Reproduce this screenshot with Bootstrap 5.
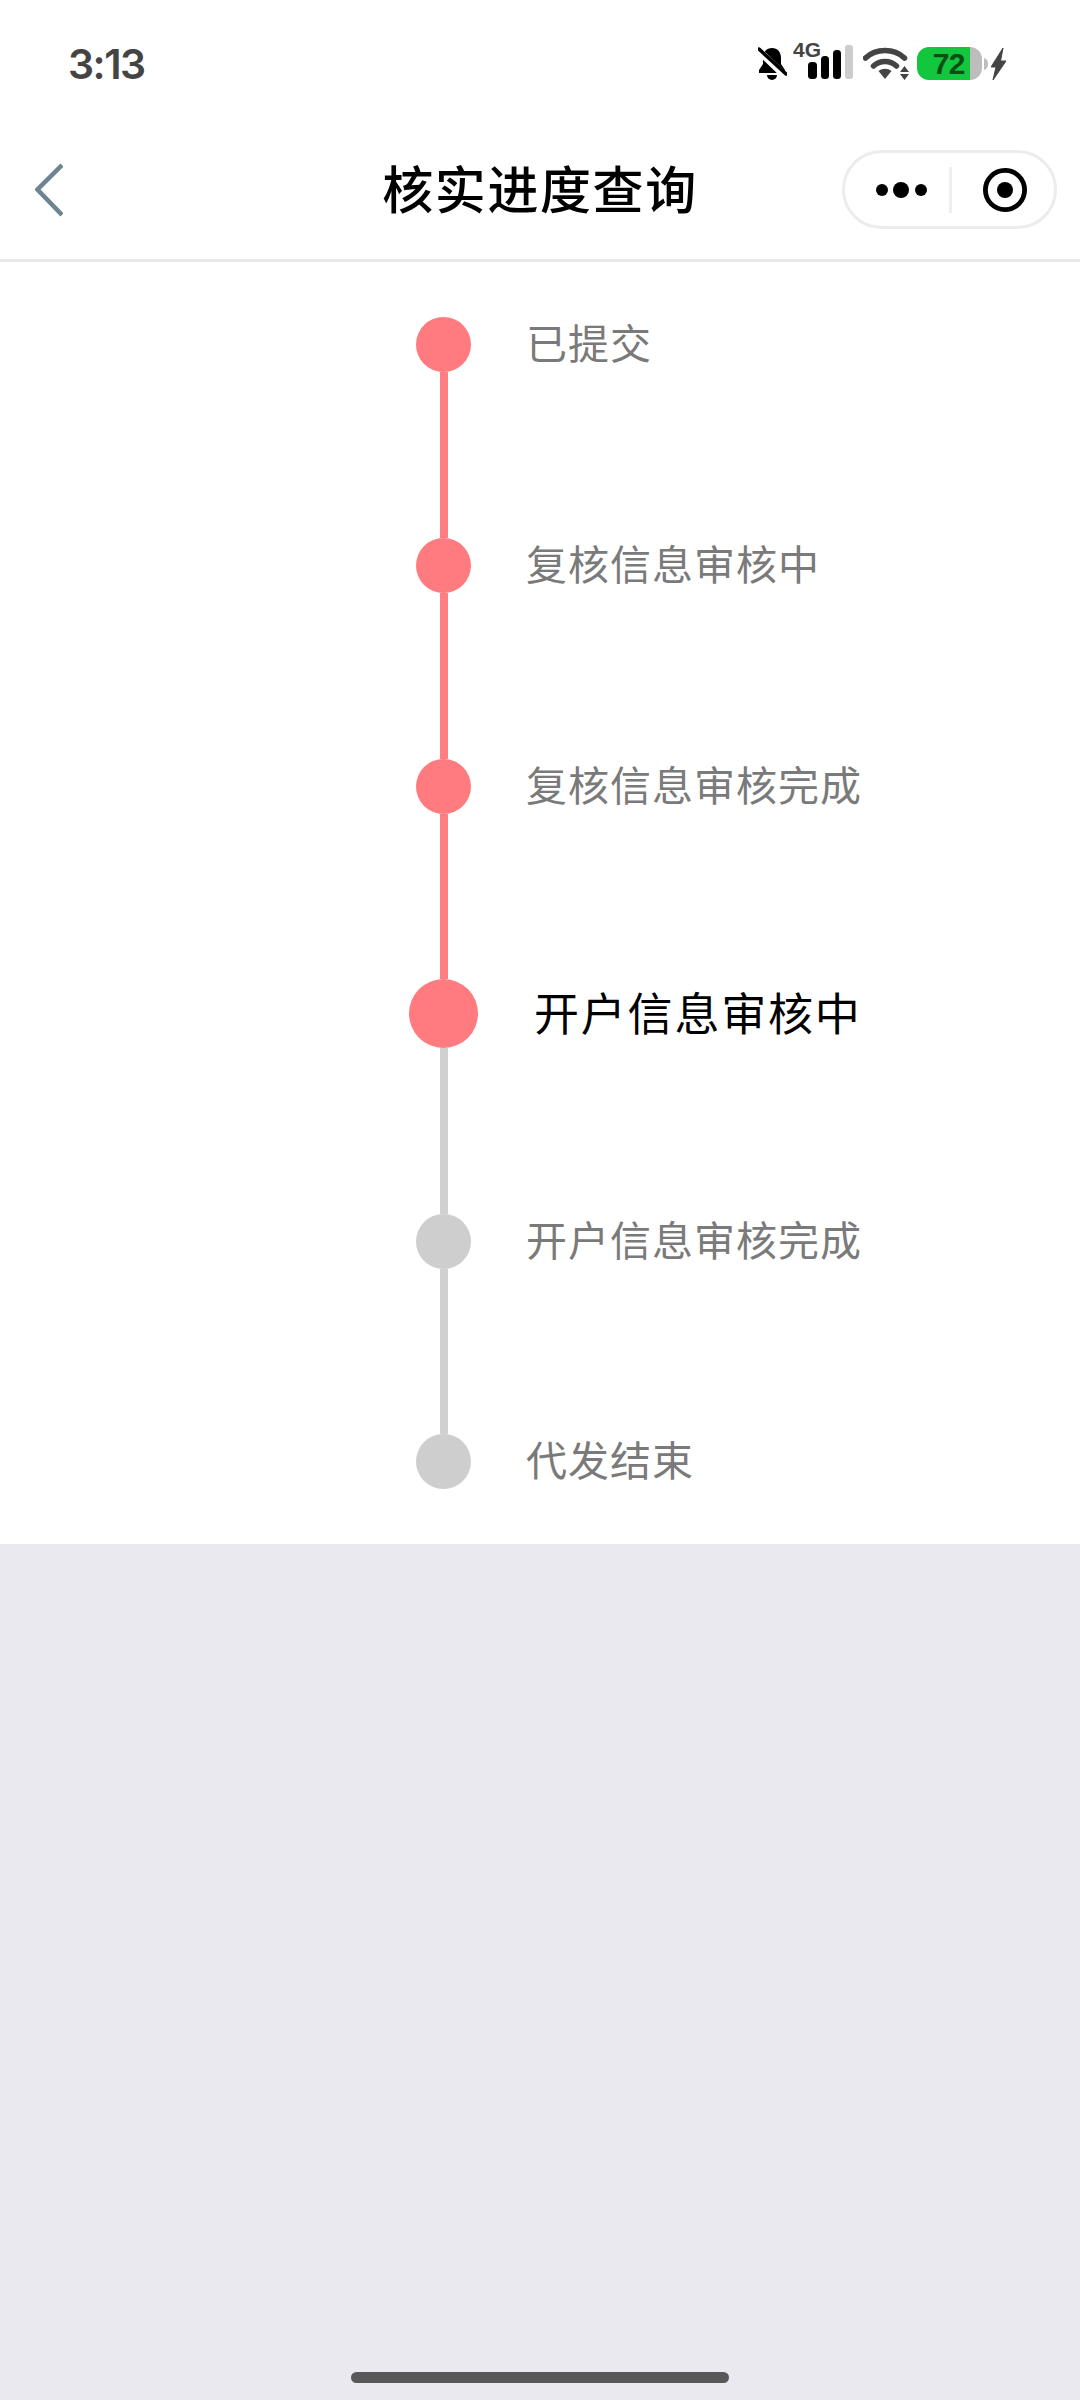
<!DOCTYPE html>
<html lang="zh-CN">
<head>
<meta charset="utf-8">
<link rel="stylesheet" href="https://cdn.jsdelivr.net/npm/bootstrap@5.3.0/dist/css/bootstrap.min.css">
<style>
html,body{height:100%}
body{width:1080px;height:2400px;background:#e9e9ef;font-family:"Liberation Sans","Noto Sans CJK SC",sans-serif;overflow:hidden}
.app-shell{height:2400px}
.status-strip{height:120px;padding:0 74px 0 68px;flex:none}
.clock{font-family:Inter,Roboto,sans-serif;font-weight:600;font-size:41px;line-height:1;color:#444;letter-spacing:-1.5px;margin-top:8px}
.status-icons{margin-top:2px}
.status-icons svg{display:block;flex:none}
.ic-bell{margin-right:6px}.ic-signal{margin-right:10px;margin-top:-4px}.ic-wifi{margin-right:8px}
.batt{width:65px;height:33px;border-radius:12px;overflow:hidden;margin-right:2px;flex:none}
.batt-fill{width:53px;background:#12c63e;color:#0a4d15;font:700 30px/33px "Liberation Sans",sans-serif;text-align:right;padding-right:5px;letter-spacing:-.5px}
.batt-rest{flex:1;background:#bdbdbd}
.ic-nub{margin:0 3px 10px 0}
.title-bar{display:grid;grid-template-columns:1fr auto 1fr;height:142px;padding:0;border-bottom:3px solid #e8e8e8;flex:none}
.back-col{padding-left:35px}
.page-title{font-family:"Noto Sans CJK SC",sans-serif;font-weight:500;font-size:51px;letter-spacing:1.6px;line-height:1;color:#000;margin-top:-4px}
.actions-col{padding-right:23px}
.capsule{width:215px;height:79px;border:3px solid #ececec;padding-left:31px}
.cap-sep{width:3px;height:46px;background:#efefef;margin:0 31px 0 22px}
.steps{display:grid;grid-template-columns:69px 1fr;column-gap:48px;padding:55px 0 55px 409px;justify-items:start;align-items:center;flex:none}
.node{width:55px;height:55px;justify-self:center;background:#ff7b7f}
.node-big{width:69px;height:69px}
.node-off{background:#cecece}
.stem{width:8px;height:166px;justify-self:center;background:#ff7e82}
.stem-tight{height:165px}
.stem-off{background:#d0d0d0}
.step-name{font-family:"Noto Sans CJK SC",sans-serif;font-size:41px;letter-spacing:1px;color:#7a7a7a;line-height:1;margin-top:-7px}
.step-now{font-size:45px;letter-spacing:1.8px;color:#000;margin-left:8px;margin-top:-5px}
.home-bar{width:378px;height:11px;background:#58585a;bottom:17px;left:351px}
</style>
</head>
<body>
<div class="app-shell d-flex flex-column position-relative">
  <div class="status-strip bg-white d-flex justify-content-between align-items-center">
    <div class="clock">3:13</div>
    <div class="status-icons d-flex align-items-end">
      <svg class="ic-bell" width="29" height="33" viewBox="0 0 29 33"><path d="M14 1c-5.500 0-9 4-9 10v6l-4 6v3h26v-3l-4-6v-6c0-6-3.500-10-9-10z" fill="#000"/><path d="M9 28h10a5 5 0 0 1-10 0z" fill="#000"/><path d="M1 4l26 25" stroke="#fff" stroke-width="7"/><path d="M1 2l27 25" stroke="#000" stroke-width="3.500" stroke-linecap="round"/></svg>
      <svg class="ic-signal" width="60" height="42" viewBox="0 0 60 42"><text x="0" y="19" font-family="Liberation Sans" font-weight="700" font-size="21" fill="#444">4G</text><rect x="15" y="24" width="9" height="17" rx="3.500"/><rect x="28" y="18" width="8" height="23" rx="3.500"/><rect x="40" y="12" width="8" height="29" rx="3.500"/><rect x="52" y="7" width="8" height="34" rx="3" fill="#ccc"/></svg>
      <svg class="ic-wifi" width="46" height="33" viewBox="0 0 46 33"><path d="M2.500 11C13 1 31 1 41.500 11" fill="none" stroke="#444" stroke-width="5.500" stroke-linecap="round"/><path d="M10.500 19C17 13 27 13 33.500 19" fill="none" stroke="#444" stroke-width="5.500" stroke-linecap="round"/><path d="M15.500 24c4-3 9-3 13 0l-6.500 8z" fill="#444"/><path d="M41.500 19l4.500 6h-9zM41.500 33l4.500-6h-9z" fill="#444"/></svg>
      <div class="batt d-flex"><div class="batt-fill">72</div><div class="batt-rest"></div></div>
      <svg class="ic-nub" width="4" height="12" viewBox="0 0 4 12"><path d="M0 0c3 1 4 3 4 6s-1 5-4 6z" fill="#bdbdbd"/></svg>
      <svg width="15" height="32" viewBox="0 0 15 32"><path d="M12 0L0 19h5L2 32 15 13H9.500z" fill="#444" stroke="#444" stroke-width="1"/></svg>
    </div>
  </div>
  <nav class="navbar title-bar bg-white">
    <div class="back-col d-flex">
      <svg width="28" height="54" viewBox="0 0 28 54"><path d="M27 2L2.500 26.500 27 52" fill="none" stroke="#6f8492" stroke-width="4.500"/></svg>
    </div>
    <div class="page-title">核实进度查询</div>
    <div class="actions-col d-flex justify-content-end">
      <div class="capsule rounded-pill d-flex align-items-center">
        <svg width="51" height="16" viewBox="0 0 51 16"><circle cx="6" cy="8" r="6"/><circle cx="25" cy="8" r="8"/><circle cx="45" cy="8" r="6"/></svg>
        <div class="cap-sep"></div>
        <svg width="44" height="44" viewBox="0 0 44 44"><circle cx="22" cy="22" r="19.600" fill="none" stroke="#000" stroke-width="4.800"/><circle cx="22" cy="22" r="8"/></svg>
      </div>
    </div>
  </nav>
  <div class="steps bg-white">
    <div class="node rounded-circle"></div><div class="step-name">已提交</div>
    <div class="stem"></div><div></div>
    <div class="node rounded-circle"></div><div class="step-name">复核信息审核中</div>
    <div class="stem"></div><div></div>
    <div class="node rounded-circle"></div><div class="step-name">复核信息审核完成</div>
    <div class="stem stem-tight"></div><div></div>
    <div class="node node-big rounded-circle"></div><div class="step-name step-now">开户信息审核中</div>
    <div class="stem stem-off"></div><div></div>
    <div class="node node-off rounded-circle"></div><div class="step-name">开户信息审核完成</div>
    <div class="stem stem-off stem-tight"></div><div></div>
    <div class="node node-off rounded-circle"></div><div class="step-name">代发结束</div>
  </div>
  <div class="home-bar position-absolute rounded-pill"></div>
</div>
<script src="https://cdn.jsdelivr.net/npm/bootstrap@5.3.0/dist/js/bootstrap.bundle.min.js"></script>
</body>
</html>
